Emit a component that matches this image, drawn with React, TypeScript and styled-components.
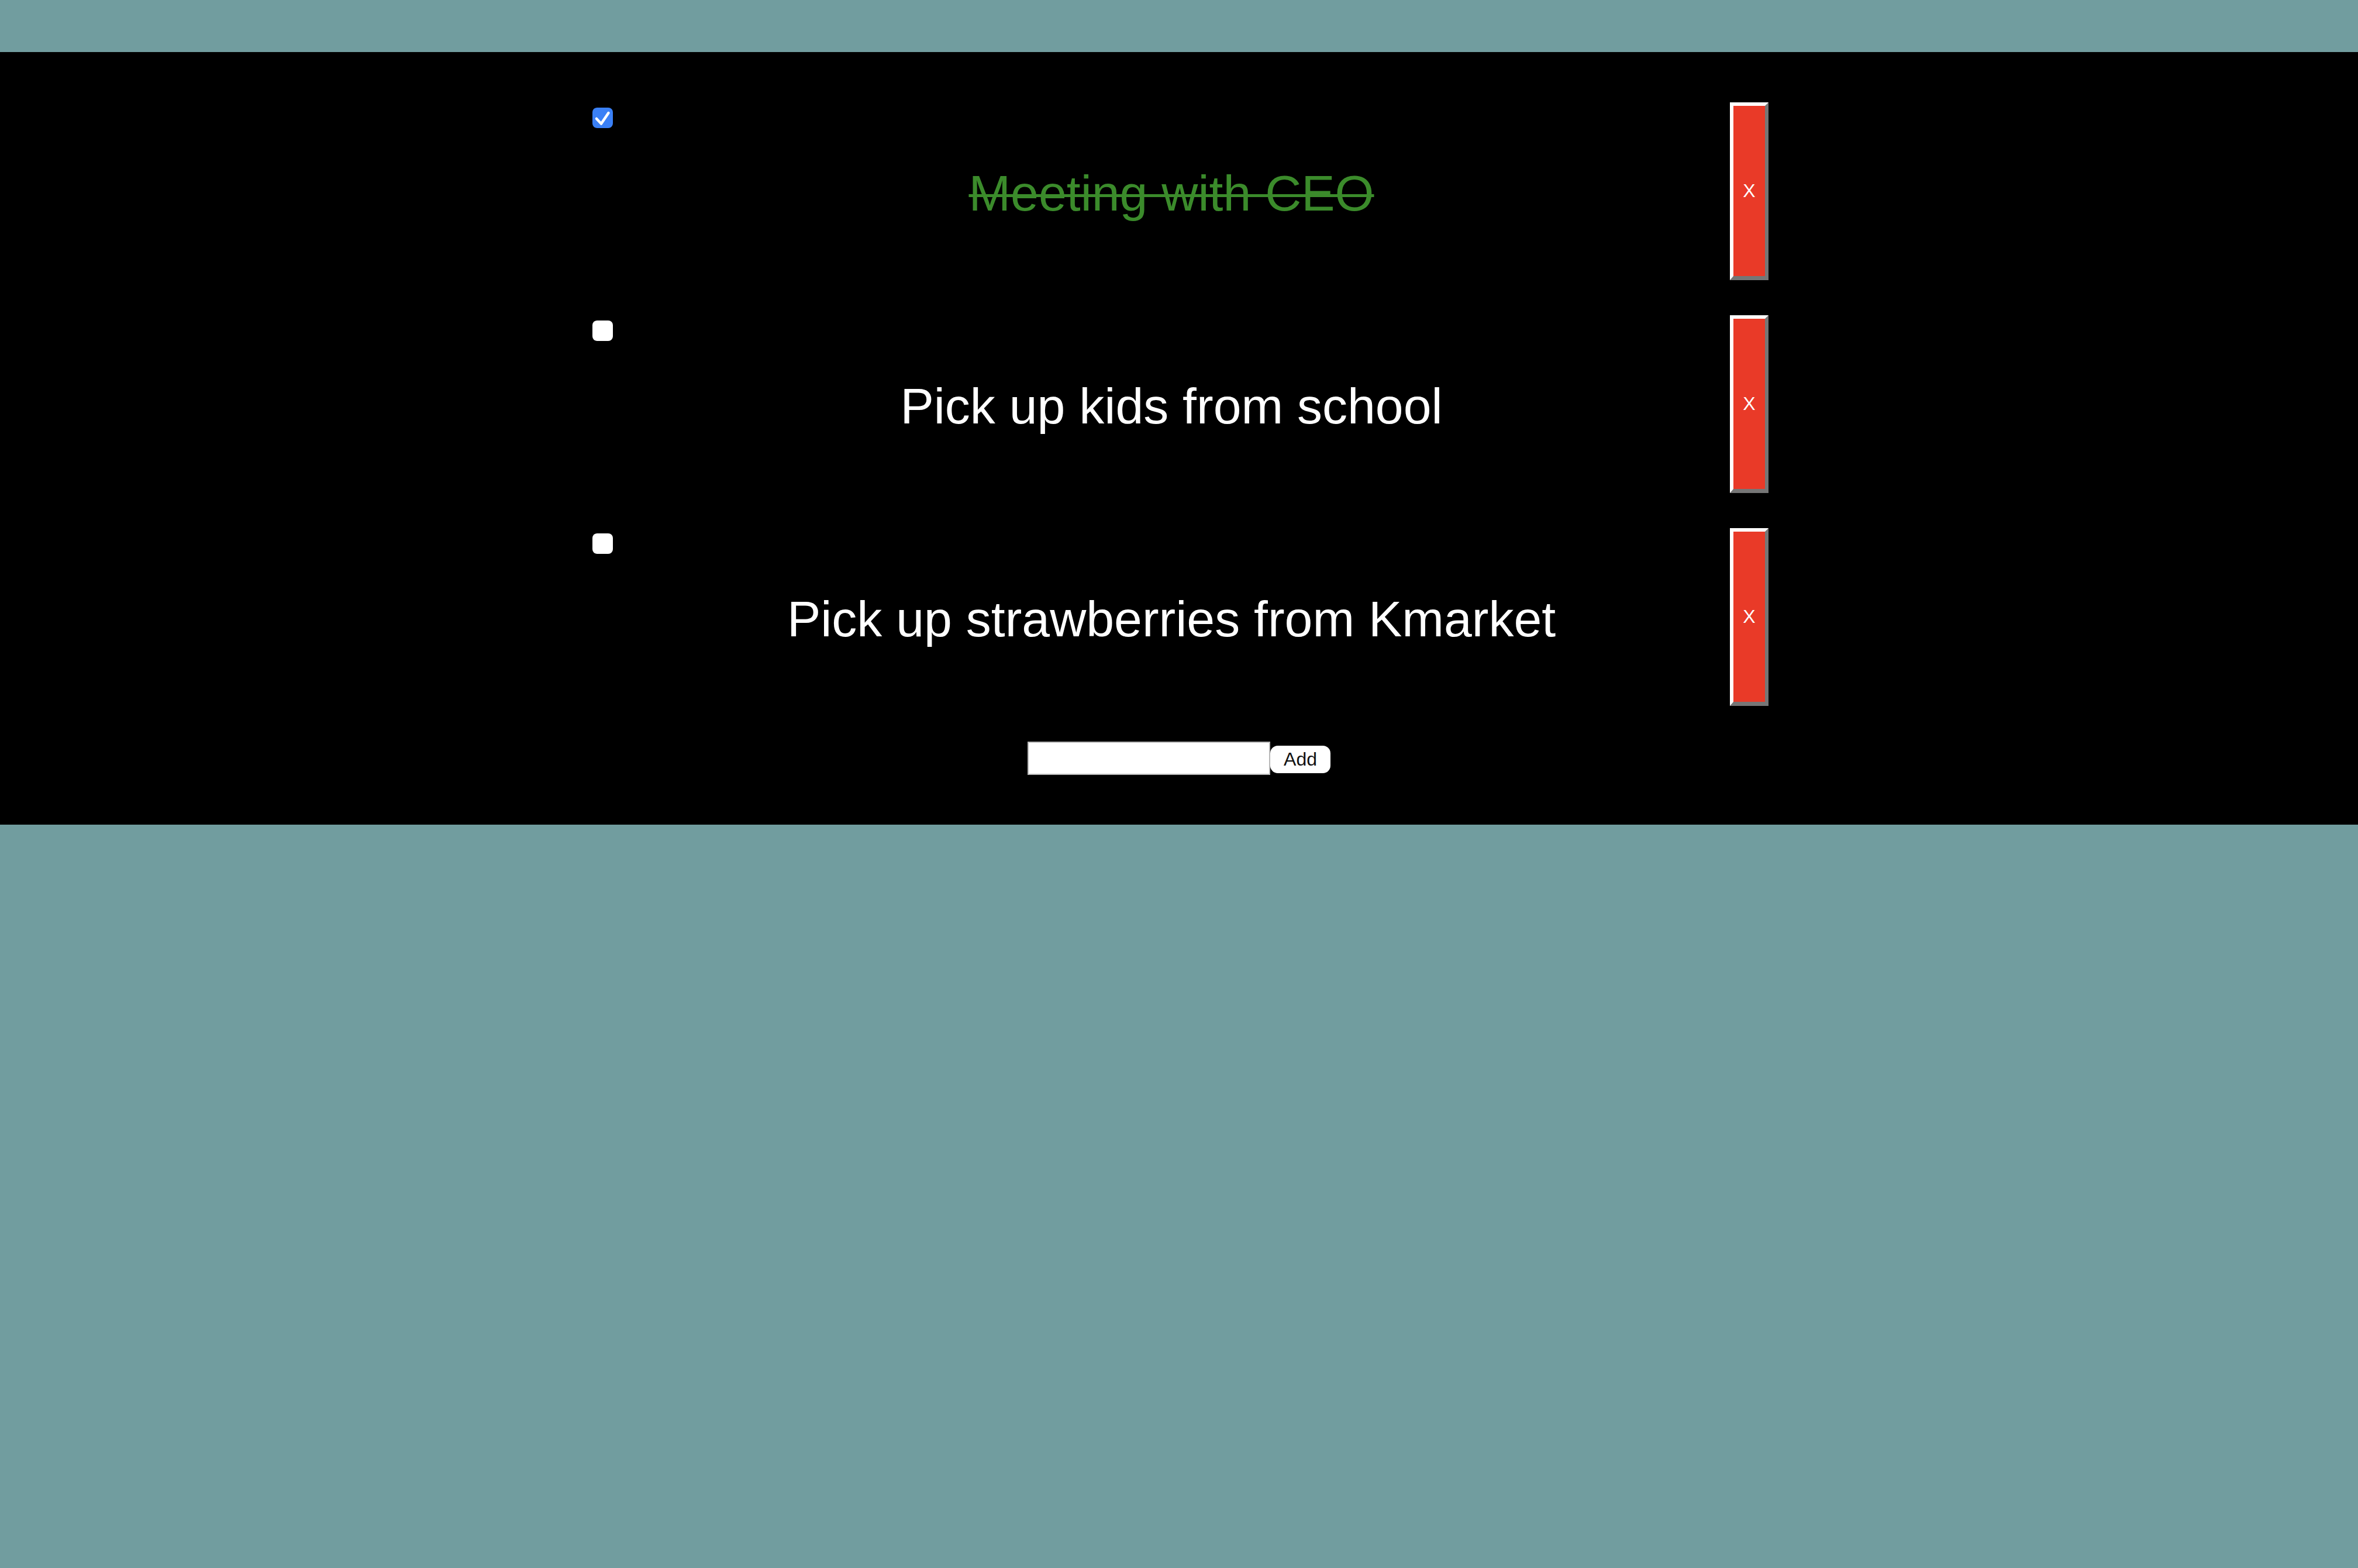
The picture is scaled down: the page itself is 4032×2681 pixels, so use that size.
import * as React from 'react'
import styled, { createGlobalStyle } from 'styled-components'

interface Todo {
  id: number
  text: string
  done: boolean
}

const initialTodos: Todo[] = [
  { id: 1, text: 'Meeting with CEO', done: true },
  { id: 2, text: 'Pick up kids from school', done: false },
  { id: 3, text: 'Pick up strawberries from Kmarket', done: false },
]

const GlobalStyle = createGlobalStyle`
  html, body {
    margin: 0;
    padding: 0;
    background-color: #719d9f;
    font-family: 'Liberation Sans', Arial, sans-serif;
  }
`

const Page = styled.div`
  padding-top: 89px;
  min-height: 2681px;
  box-sizing: border-box;
`

const Panel = styled.div`
  background-color: #000;
  padding: 86px 0 85px;
  display: flex;
  flex-direction: column;
  align-items: center;
`

const List = styled.ul`
  list-style: none;
  margin: 0 0 0 5px;
  padding: 0;
  width: 2011px;
  display: flex;
  flex-direction: column;
  gap: 60px;
`

const Row = styled.li`
  display: flex;
  align-items: stretch;
  height: 304px;
`

const CheckBox = styled.button<{ checked: boolean }>`
  align-self: flex-start;
  margin: 9px 0 0;
  padding: 0;
  width: 35px;
  height: 35px;
  border: none;
  border-radius: 8px;
  background-color: ${(p) => (p.checked ? '#3a80f6' : '#ffffff')};
  display: flex;
  align-items: center;
  justify-content: center;
  cursor: pointer;
`

const Title = styled.h1<{ done: boolean }>`
  flex: 1;
  margin: 0;
  padding-top: 6px;
  display: flex;
  align-items: center;
  justify-content: center;
  font-size: 86px;
  font-weight: 400;
  color: ${(p) => (p.done ? '#3b8b2b' : '#ffffff')};
  text-decoration: ${(p) => (p.done ? 'line-through' : 'none')};
  text-decoration-thickness: 5px;
  white-space: nowrap;
`

const DeleteButton = styled.button`
  width: 66px;
  padding: 0;
  border-width: 6px 6px 7px 6px;
  border-style: solid;
  border-color: #ffffff #767676 #767676 #ffffff;
  background-color: #e93a28;
  color: #ffffff;
  font-family: 'Liberation Sans', Arial, sans-serif;
  font-size: 32px;
  cursor: pointer;
`

const AddForm = styled.form`
  margin-top: 61px;
  display: flex;
  align-items: center;
`

const TextInput = styled.input`
  width: 415px;
  height: 57px;
  box-sizing: border-box;
  border: 2px solid #b8b8b8;
  background: #ffffff;
  font-size: 30px;
  padding: 0 8px;
  outline: none;
`

const AddButton = styled.button`
  width: 103px;
  height: 47px;
  margin-top: 4px;
  border: none;
  border-radius: 13px;
  background: #ffffff;
  color: #111;
  font-family: 'Liberation Sans', Arial, sans-serif;
  font-size: 32px;
  padding: 0;
  cursor: pointer;
`

const CheckMark = () => (
  <svg width="35" height="35" viewBox="0 0 35 35">
    <path
      d="M7 19 L15 27.5 L27.5 9"
      fill="none"
      stroke="#ffffff"
      strokeWidth="4.5"
      strokeLinecap="round"
      strokeLinejoin="round"
    />
  </svg>
)

export default function App() {
  const [todos, setTodos] = React.useState<Todo[]>(initialTodos)
  const [draft, setDraft] = React.useState('')

  const toggle = (id: number) =>
    setTodos((list) =>
      list.map((t) => (t.id === id ? { ...t, done: !t.done } : t))
    )

  const remove = (id: number) =>
    setTodos((list) => list.filter((t) => t.id !== id))

  const add = (e: React.FormEvent) => {
    e.preventDefault()
    if (!draft.trim()) return
    setTodos((list) => [...list, { id: Date.now(), text: draft, done: false }])
    setDraft('')
  }

  return (
    <Page>
      <GlobalStyle />
      <Panel>
        <List>
          {todos.map((todo) => (
            <Row key={todo.id}>
              <CheckBox
                type="button"
                role="checkbox"
                aria-checked={todo.done}
                checked={todo.done}
                onClick={() => toggle(todo.id)}
              >
                {todo.done && <CheckMark />}
              </CheckBox>
              <Title done={todo.done}>{todo.text}</Title>
              <DeleteButton type="button" onClick={() => remove(todo.id)}>
                X
              </DeleteButton>
            </Row>
          ))}
        </List>
        <AddForm onSubmit={add}>
          <TextInput value={draft} onChange={(e) => setDraft(e.target.value)} />
          <AddButton type="submit">Add</AddButton>
        </AddForm>
      </Panel>
    </Page>
  )
}
